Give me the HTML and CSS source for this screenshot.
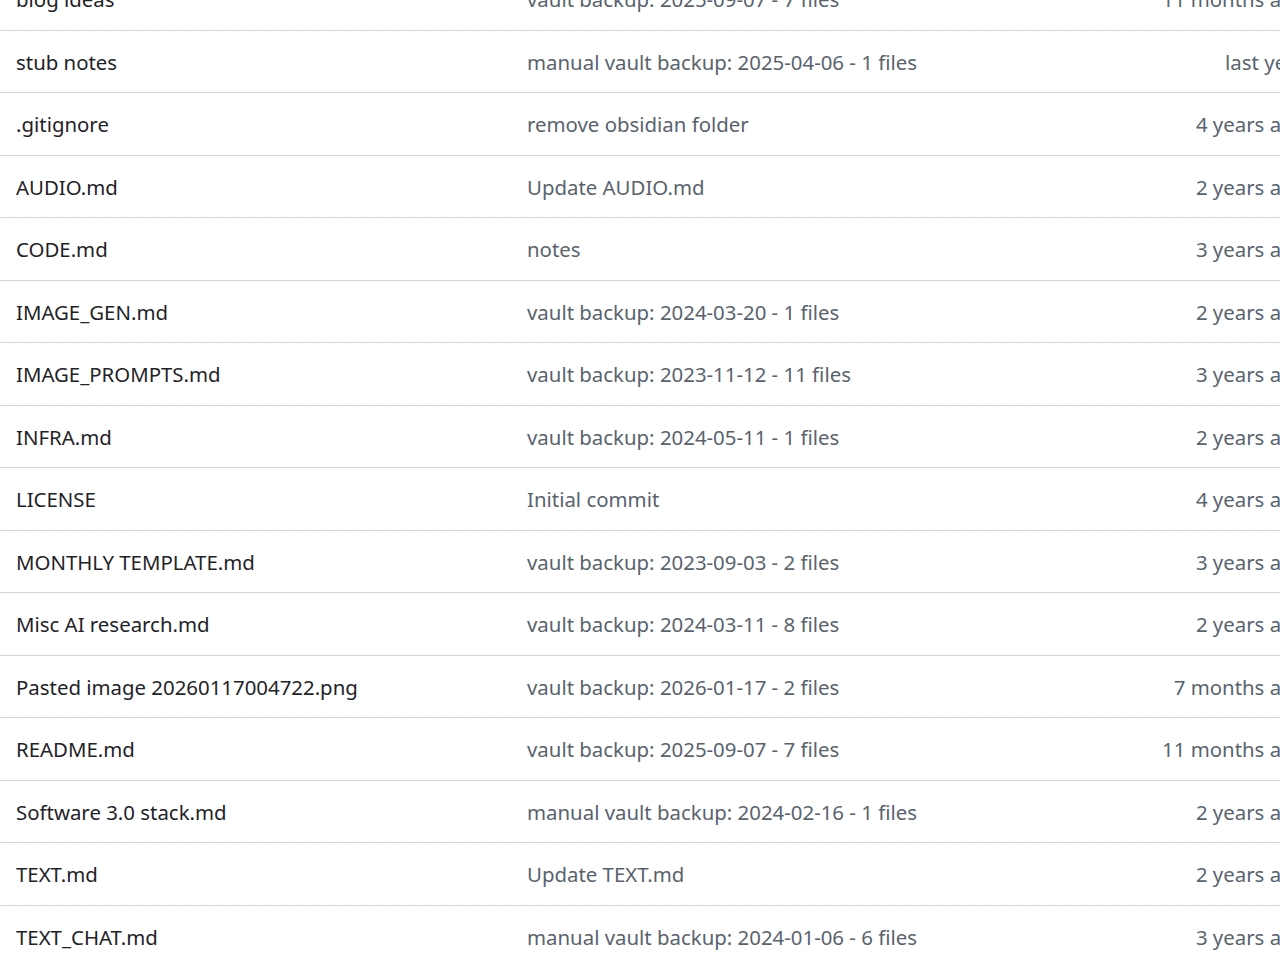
FILE: index.html
```html
<!DOCTYPE html>
<html lang="en">
<head>
<meta charset="utf-8">
<title>Files</title>
<link rel="stylesheet" href="styles.css">
</head>
<body>
<div class="files">
  <div class="row"><span class="name">blog ideas</span><span class="msg">vault backup: 2025-09-07 - 7 files</span><span class="age">11 months ago</span></div>
  <div class="row"><span class="name">stub notes</span><span class="msg">manual vault backup: 2025-04-06 - 1 files</span><span class="age">last year</span></div>
  <div class="row"><span class="name">.gitignore</span><span class="msg">remove obsidian folder</span><span class="age">4 years ago</span></div>
  <div class="row"><span class="name">AUDIO.md</span><span class="msg">Update AUDIO.md</span><span class="age">2 years ago</span></div>
  <div class="row"><span class="name">CODE.md</span><span class="msg">notes</span><span class="age">3 years ago</span></div>
  <div class="row"><span class="name">IMAGE_GEN.md</span><span class="msg">vault backup: 2024-03-20 - 1 files</span><span class="age">2 years ago</span></div>
  <div class="row"><span class="name">IMAGE_PROMPTS.md</span><span class="msg">vault backup: 2023-11-12 - 11 files</span><span class="age">3 years ago</span></div>
  <div class="row"><span class="name">INFRA.md</span><span class="msg">vault backup: 2024-05-11 - 1 files</span><span class="age">2 years ago</span></div>
  <div class="row"><span class="name">LICENSE</span><span class="msg">Initial commit</span><span class="age">4 years ago</span></div>
  <div class="row"><span class="name">MONTHLY TEMPLATE.md</span><span class="msg">vault backup: 2023-09-03 - 2 files</span><span class="age">3 years ago</span></div>
  <div class="row"><span class="name">Misc AI research.md</span><span class="msg">vault backup: 2024-03-11 - 8 files</span><span class="age">2 years ago</span></div>
  <div class="row"><span class="name">Pasted image 20260117004722.png</span><span class="msg">vault backup: 2026-01-17 - 2 files</span><span class="age">7 months ago</span></div>
  <div class="row"><span class="name">README.md</span><span class="msg">vault backup: 2025-09-07 - 7 files</span><span class="age">11 months ago</span></div>
  <div class="row"><span class="name">Software 3.0 stack.md</span><span class="msg">manual vault backup: 2024-02-16 - 1 files</span><span class="age">2 years ago</span></div>
  <div class="row"><span class="name">TEXT.md</span><span class="msg">Update TEXT.md</span><span class="age">2 years ago</span></div>
  <div class="row"><span class="name">TEXT_CHAT.md</span><span class="msg">manual vault backup: 2024-01-06 - 6 files</span><span class="age">3 years ago</span></div>
</div>
</body>
</html>
```

FILE: styles.css
```css
html, body {
  margin: 0;
  padding: 0;
  background: #ffffff;
  overflow: hidden;
}

body {
  font-family: "Noto Sans", "Open Sans", sans-serif;
  font-size: 20.4px;
  color: #1f2328;
}

/* list is scrolled so the first entry sits partly above the top edge */
.files {
  width: 1322px;
  margin-top: -32px;
}

.row {
  display: grid;
  grid-template-columns: 511px 1fr auto;
  align-items: center;
  box-sizing: border-box;
  height: 62.5px;
  padding: 1px 16px 0;
  border-bottom: 1px solid #d1d9e0;
  white-space: nowrap;
}

.name {
  color: #1f2328;
}

.msg {
  color: #59636e;
}

.age {
  color: #59636e;
  text-align: right;
}
```
